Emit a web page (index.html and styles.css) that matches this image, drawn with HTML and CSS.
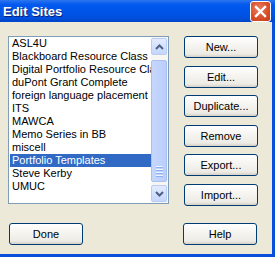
FILE: index.html
```html
<!DOCTYPE html>
<html lang="en">
<head>
    <meta charset="UTF-8">
    <title>Edit Sites</title>
    <link rel="stylesheet" href="styles.css">
</head>
<body>
    <div class="window">
        <div class="titlebar">
            <span class="title">Edit Sites</span>
            <div class="close-btn">
                <svg width="13" height="13" viewBox="0 0 13 13">
                    <path d="M2 2 L11 11 M11 2 L2 11" stroke="#fff" stroke-width="2.4" stroke-linecap="square"/>
                </svg>
            </div>
        </div>
        <div class="dialog">
            <div class="main-row">
                <div class="listbox">
                    <ul class="sites">
                        <li>ASL4U</li>
                        <li>Blackboard Resource Class</li>
                        <li>Digital Portfolio Resource Class</li>
                        <li>duPont Grant Complete</li>
                        <li>foreign language placement</li>
                        <li>ITS</li>
                        <li>MAWCA</li>
                        <li>Memo Series in BB</li>
                        <li>miscell</li>
                        <li class="selected">Portfolio Templates</li>
                        <li>Steve Kerby</li>
                        <li>UMUC</li>
                    </ul>
                    <div class="scrollbar">
                        <div class="arrow">
                            <svg width="9" height="6" viewBox="0 0 9 6"><path d="M1 5 L4.5 1.5 L8 5" fill="none" stroke="#4D6185" stroke-width="2"/></svg>
                        </div>
                        <div class="track">
                            <div class="thumb">
                                <div class="grip"><span></span><span></span><span></span><span></span></div>
                            </div>
                        </div>
                        <div class="arrow">
                            <svg width="9" height="6" viewBox="0 0 9 6"><path d="M1 1 L4.5 4.5 L8 1" fill="none" stroke="#4D6185" stroke-width="2"/></svg>
                        </div>
                    </div>
                </div>
                <div class="actions">
                    <button>New...</button>
                    <button>Edit...</button>
                    <button>Duplicate...</button>
                    <button>Remove</button>
                    <button>Export...</button>
                    <button>Import...</button>
                </div>
            </div>
            <div class="bottom-row">
                <button>Done</button>
                <button>Help</button>
            </div>
        </div>
    </div>
</body>
</html>
```

FILE: styles.css
```css
html, body {
    margin: 0;
    padding: 0;
}
body {
    width: 275px;
    height: 257px;
    overflow: hidden;
    font-family: "Liberation Sans", Arial, sans-serif;
    font-size: 11px;
}
.window {
    width: 275px;
    height: 257px;
    display: flex;
    flex-direction: column;
    background: #0A4FDC;
}
.titlebar {
    height: 22px;
    display: flex;
    align-items: center;
    padding: 0 4px 0 3px;
    background: linear-gradient(#2C77F0 0px, #1A68EE 2px, #0058EE 5px, #0055E8 12px, #004FDD 18px, #0046C8 22px);
}
.title {
    color: #fff;
    font-weight: bold;
    font-size: 13px;
    text-shadow: 1px 1px 0 #0A1E7A;
    flex: 1;
}
.close-btn {
    width: 19px;
    height: 19px;
    border: 1px solid #fff;
    border-radius: 3px;
    background: radial-gradient(circle at 40% 35%, #E9805F 0, #D9502A 55%, #C4391A 100%);
    display: flex;
    align-items: center;
    justify-content: center;
    margin-top: 1px;
}
.dialog {
    flex: 1;
    background: #ECE9D8;
    margin: 0 3px 3px 0;
    padding: 14px 15px 0 8px;
}
.main-row {
    display: flex;
    gap: 15px;
}
.listbox {
    width: 159px;
    height: 166px;
    border: 1px solid #7F9DB9;
    background: #fff;
    display: flex;
}
.sites {
    list-style: none;
    margin: 0;
    padding: 0 0 0 1px;
    flex: 1;
    overflow: hidden;
}
.sites li {
    height: 13px;
    line-height: 13px;
    padding-left: 2px;
    white-space: nowrap;
    overflow: hidden;
}
.sites li.selected {
    background: #316AC5;
    color: #fff;
}
.scrollbar {
    width: 16px;
    display: flex;
    flex-direction: column;
    background: #F7F6F0;
    padding: 1px 1px 1px 0;
}
.arrow {
    height: 15px;
    border: 1px solid #B9CCF5;
    border-radius: 2px;
    background: linear-gradient(#E3ECFF, #C5D5FC);
    display: flex;
    align-items: center;
    justify-content: center;
}
.track {
    flex: 1;
    padding: 5px 0 3px;
    display: flex;
}
.thumb {
    flex: 1;
    border: 1px solid #A9BFF0;
    border-radius: 2px;
    background: linear-gradient(90deg, #C6D7FC, #BACEFB);
    display: flex;
    flex-direction: column;
    justify-content: flex-end;
    align-items: center;
    padding-bottom: 4px;
}
.grip span {
    display: block;
    width: 7px;
    height: 1px;
    margin-top: 1px;
    background: #EEF4FE;
    border-bottom: 1px solid #8CB0F8;
}
.actions {
    display: flex;
    flex-direction: column;
    gap: 7.6px;
}
button {
    width: 74px;
    height: 22px;
    padding: 0;
    font-family: "Liberation Sans", Arial, sans-serif;
    font-size: 11px;
    color: #000;
    border: 1px solid #003C74;
    border-radius: 3px;
    background: linear-gradient(#FFFFFF 0%, #F6F5F1 40%, #ECEBE5 85%, #D6D0C5 100%);
}
.bottom-row {
    display: flex;
    justify-content: space-between;
    margin-top: 17px;
    padding-left: 1px;
}
```
